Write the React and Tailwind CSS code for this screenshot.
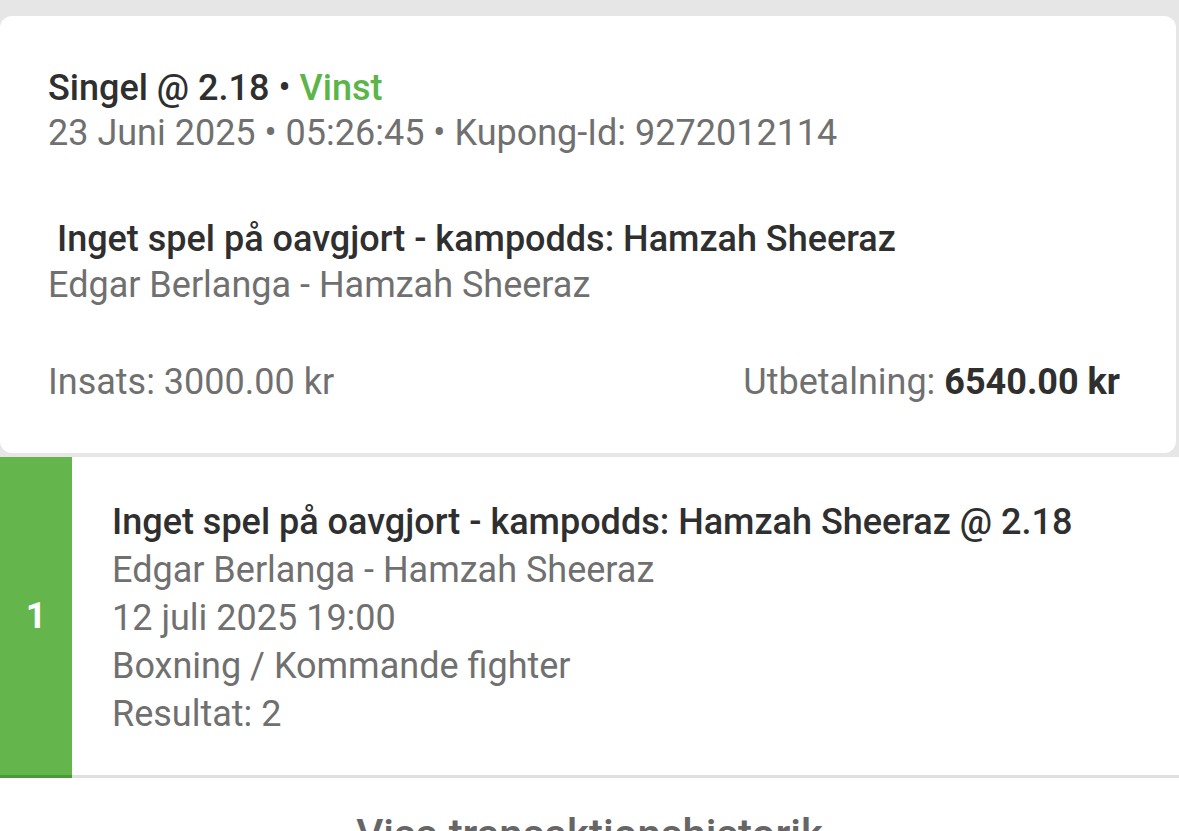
import React from 'react'

export default function App() {
  return (
    <div className="min-h-screen bg-white font-['Roboto',sans-serif] text-[36px]">
      {/* Bet summary card */}
      <div className="bg-[#e6e6e6] pt-[16px] pb-[4px]">
        <div className="rounded-[12px] bg-white pl-[48px] pr-[56px] pt-[50px] pb-[48px] mr-[3px]">
          <div className="leading-[45px]">
            <div className="font-medium text-[#2f2f2f]">
              Singel @ 2.18 <span className="font-normal">•</span> <span className="text-[#5cb548]">Vinst</span>
            </div>
            <div className="text-[#707070]">23 Juni 2025 • 05:26:45 • Kupong-Id: 9272012114</div>
          </div>

          <div className="mt-[60px] leading-[46px]">
            <div className="font-medium text-[#2f2f2f]">&nbsp;Inget spel på oavgjort - kampodds: Hamzah Sheeraz</div>
            <div className="text-[#707070]">Edgar Berlanga - Hamzah Sheeraz</div>
          </div>

          <div className="mt-[52px] flex justify-between leading-[45px] text-[#707070]">
            <span>Insats: 3000.00 kr</span>
            <span>
              Utbetalning: <span className="font-bold text-[#2f2f2f]">6540.00 kr</span>
            </span>
          </div>
        </div>
      </div>

      {/* Selection row */}
      <div className="flex">
        <div className="flex w-[72px] shrink-0 items-center justify-center border-b-[3px] border-[#4a9a3a] bg-[#64b54c] font-bold text-white">
          1
        </div>
        <div className="flex-1 border-b-[3px] border-[#e0e0e0] pl-[40px] pt-[41px] pb-[37px] leading-[48px] text-[#707070]">
          <div className="font-medium text-[#2f2f2f]">Inget spel på oavgjort - kampodds: Hamzah Sheeraz @ 2.18</div>
          <div>Edgar Berlanga - Hamzah Sheeraz</div>
          <div>12 juli 2025 19:00</div>
          <div>Boxning / Kommande fighter</div>
          <div>Resultat: 2</div>
        </div>
      </div>

      <div className="pt-[33px] pb-[31px] text-center text-[42px] font-medium leading-[48px] text-[#666666]">
        Visa transaktionshistorik
      </div>
    </div>
  )
}
